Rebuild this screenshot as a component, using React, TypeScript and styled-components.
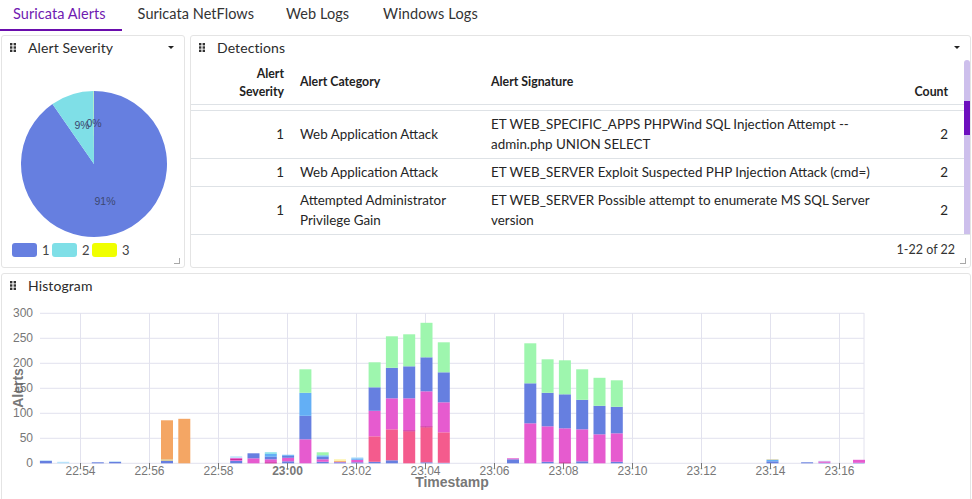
import styled, { createGlobalStyle } from "styled-components";

const GlobalStyle = createGlobalStyle`
  html, body {
    margin: 0;
    height: 100%;
    overflow: hidden;
    background: #fff;
  }
  body {
    font-family: "Lato", "Noto Sans", sans-serif;
    color: #212529;
  }
`;

const C = {
  blue: "#667fe0",
  pink: "#e65bcf",
  rose: "#f45b8d",
  green: "#9ef6ae",
  sky: "#63aff5",
  orange: "#f4a664",
  cyan: "#7fdfe7",
  tan: "#d8c98a",
  pale: "#fdf3a5",
  dark: "#c0007f",
  ice: "#b9e4fb",
};

// [start index in 30s steps from 22:53, [colour, upper value]...]
const bars: [number, [string, number][]][] = [
  [0, [[C.blue, 5], [C.ice, 6]]],
  [1, [[C.ice, 3]]],
  [3, [[C.blue, 2]]],
  [4, [[C.blue, 3], [C.ice, 4]]],
  [7, [[C.blue, 5], [C.tan, 8], [C.orange, 86]]],
  [8, [[C.orange, 89]]],
  [11, [[C.blue, 5], [C.pink, 7], [C.dark, 9], [C.pink, 11], [C.ice, 14]]],
  [12, [[C.pink, 10], [C.blue, 20]]],
  [13, [[C.dark, 2], [C.pink, 8], [C.blue, 13], [C.sky, 19], [C.cyan, 22]]],
  [14, [[C.blue, 4], [C.pink, 11], [C.blue, 15], [C.sky, 17]]],
  [15, [[C.pink, 48], [C.blue, 95], [C.sky, 141], [C.green, 188]]],
  [16, [[C.blue, 3], [C.pink, 8], [C.blue, 13], [C.sky, 16], [C.green, 22]]],
  [17, [[C.blue, 2], [C.pink, 3], [C.orange, 5], [C.pale, 8]]],
  [18, [[C.blue, 2], [C.pink, 7], [C.sky, 10], [C.ice, 12]]],
  [19, [[C.blue, 3], [C.rose, 54], [C.pink, 105], [C.blue, 152], [C.green, 202]]],
  [20, [[C.blue, 6], [C.rose, 68], [C.pink, 130], [C.blue, 191], [C.green, 254]]],
  [21, [[C.rose, 64], [C.dark, 66], [C.pink, 130], [C.blue, 194], [C.green, 258]]],
  [22, [[C.blue, 2], [C.rose, 72], [C.dark, 74], [C.pink, 144], [C.blue, 212], [C.green, 281]]],
  [23, [[C.blue, 1], [C.rose, 62], [C.pink, 122], [C.blue, 182], [C.green, 242]]],
  [27, [[C.blue, 8], [C.pink, 10]]],
  [28, [[C.pink, 80], [C.blue, 160], [C.green, 240]]],
  [29, [[C.blue, 3], [C.pink, 74], [C.blue, 141], [C.green, 208]]],
  [30, [[C.dark, 2], [C.pink, 70], [C.blue, 138], [C.green, 206]]],
  [31, [[C.blue, 4], [C.pink, 68], [C.blue, 127], [C.green, 188]]],
  [32, [[C.pink, 58], [C.blue, 115], [C.green, 171]]],
  [33, [[C.blue, 3], [C.pink, 60], [C.blue, 113], [C.green, 166]]],
  [42, [[C.blue, 4], [C.sky, 7], [C.tan, 8]]],
  [44, [[C.blue, 2]]],
  [45, [[C.blue, 1], [C.pink, 4], [C.ice, 5]]],
  [47, [[C.blue, 1], [C.pink, 7]]],
];

const ticks = ["22:54", "22:56", "22:58", "23:00", "23:02", "23:04", "23:06", "23:08", "23:10", "23:12", "23:14", "23:16"];
const levels = [0, 50, 100, 150, 200, 250, 300];

const barX = (i: number) => 45.9 + i * 17.3;
const valueY = (v: number) => 463.3 - v / 2;

const rows = [
  {
    severity: 1,
    category: "Web Application Attack",
    signature: "ET WEB_SPECIFIC_APPS PHPWind SQL Injection Attempt -- admin.php UNION SELECT",
    count: 2,
  },
  {
    severity: 1,
    category: "Web Application Attack",
    signature: "ET WEB_SERVER Exploit Suspected PHP Injection Attack (cmd=)",
    count: 2,
  },
  {
    severity: 1,
    category: "Attempted Administrator Privilege Gain",
    signature: "ET WEB_SERVER Possible attempt to enumerate MS SQL Server version",
    count: 2,
  },
];

const Page = styled.div`
  width: 972px;
  height: 499px;
  overflow: hidden;
  display: flex;
  flex-direction: column;
  gap: 5px;
`;

const TabBar = styled.div`
  display: flex;
  height: 30px;
  flex-shrink: 0;
`;

const Tab = styled.div<{ $active?: boolean }>`
  height: 31px;
  box-sizing: border-box;
  padding: 4px 16px 0;
  font-size: 14.5px;
  letter-spacing: 0.05px;
  line-height: 20px;
  color: ${(p) => (p.$active ? "#6f1ab1" : "#333")};
  border-bottom: 2px solid ${(p) => (p.$active ? "#6a0dad" : "transparent")};

  &:first-child {
    padding-left: 13px;
  }

  &:last-child {
    padding-left: 18px;
    letter-spacing: 0.15px;
  }
`;

const PanelRow = styled.div`
  display: flex;
  gap: 5px;
  padding: 0 1px;
  height: 233px;
  flex-shrink: 0;
`;

const Panel = styled.section<{ $width?: string }>`
  position: relative;
  box-sizing: border-box;
  width: ${(p) => p.$width || "auto"};
  flex: ${(p) => (p.$width ? "0 0 auto" : "1 1 0")};
  min-width: 0;
  border: 1px solid #e4e4e4;
  border-radius: 3px;
  background: #fff;
  display: flex;
  flex-direction: column;
`;

const HistogramPanel = styled(Panel)`
  margin: 0 1px;
  flex: 0 0 auto;
  height: 240px;
`;

const PanelHeader = styled.header`
  display: flex;
  align-items: center;
  height: 23px;
  flex-shrink: 0;
  padding: 0 10px 0 8px;
  font-size: 14px;
  letter-spacing: 0.1px;
  color: #2b2b2b;
`;

const PanelTitle = styled.span`
  margin-left: 12px;
  flex: 1;
`;

const Caret = styled.span`
  width: 0;
  height: 0;
  border-left: 3px solid transparent;
  border-right: 3px solid transparent;
  border-top: 3px solid #222;
`;

const Handle = styled.span`
  position: absolute;
  right: 4px;
  bottom: 3px;
  width: 5px;
  height: 5px;
  border-right: 1px solid #a8a8a8;
  border-bottom: 1px solid #a8a8a8;
`;

const PieBox = styled.div`
  flex: 1;
  display: flex;
  justify-content: center;
  padding-left: 1px;
`;

const Legend = styled.div`
  display: flex;
  align-items: center;
  height: 14px;
  padding: 0 0 10px 10px;
  font-size: 13px;
  color: #444;
`;

const Swatch = styled.i<{ $color: string }>`
  width: 25px;
  height: 14px;
  border-radius: 3px;
  background: ${(p) => p.$color};
  margin-right: 5px;
`;

const LegendLabel = styled.span`
  width: 10px;
`;

const TableArea = styled.div`
  position: relative;
  flex: 1;
  min-height: 0;
  box-sizing: border-box;
  padding-right: 6px;
  border-bottom: 1px solid #dee2e6;
`;

const Track = styled.div`
  position: absolute;
  top: 1px;
  right: 0;
  bottom: 0;
  width: 6px;
  background: #cdbfec;
  border-radius: 3px 3px 0 0;
`;

const Thumb = styled.div`
  position: absolute;
  top: 41px;
  left: 0;
  width: 100%;
  height: 34px;
  background: #6d0fbe;
`;

const rowColumns = "109px 191px 1fr 86px";

const HeadRow = styled.div`
  display: grid;
  grid-template-columns: ${rowColumns};
  height: 46px;
  box-sizing: border-box;
  border-bottom: 1px solid #dee2e6;
  font-size: 12.3px;
  font-weight: 700;
  line-height: 18px;
  color: #222;
`;

const HeadCell = styled.div<{ $right?: boolean; $end?: boolean }>`
  align-self: ${(p) => (p.$end ? "end" : "center")};
  text-align: ${(p) => (p.$right ? "right" : "left")};
  padding-right: ${(p) => (p.$right ? "16px" : "0")};
  padding-bottom: ${(p) => (p.$end ? "3px" : "0")};
`;

const HeadGap = styled.div`
  height: 5px;
  border-bottom: 1px solid #dee2e6;
`;

const RowGroup = styled.div`
  display: flex;
  flex-direction: column;
`;

const Row = styled.div`
  display: grid;
  grid-template-columns: ${rowColumns};
  align-items: center;
  box-sizing: border-box;
  padding: 3px 0 4px;
  border-bottom: 1px solid #dee2e6;
  font-size: 13.4px;
  line-height: 20px;
  color: #252525;

  &:last-child {
    border-bottom: none;
  }
`;

const NumCell = styled.div`
  text-align: right;
  padding-right: 16px;
`;

const Cell = styled.div``;

const Footer = styled.div`
  height: 32px;
  flex-shrink: 0;
  box-sizing: border-box;
  display: flex;
  align-items: center;
  justify-content: flex-end;
  padding: 0 15px 4px 0;
  font-size: 12.5px;
  color: #333;
`;

const Axis = styled.text`
  font-family: "Liberation Sans", sans-serif;
  font-size: 12px;
  fill: #777;
`;

const AxisTitle = styled.text`
  font-family: "Liberation Sans", sans-serif;
  font-size: 14px;
  font-weight: 700;
  fill: #666;
  fill-opacity: 0.9;
`;

const PieLabel = styled.text`
  font-family: "Liberation Sans", sans-serif;
  font-size: 10.5px;
  fill: #3c4870;
  text-anchor: middle;
`;

const Grip = () => (
  <svg width="6" height="9" viewBox="0 0 6 9">
    {[0, 3.3, 6.6].map((y) =>
      [0, 3.6].map((x) => <rect key={`${x}-${y}`} x={x} y={y} width="2.4" height="2.4" fill="#333" />)
    )}
  </svg>
);

const sector = (from: number, to: number) => {
  const cx = 75;
  const cy = 75;
  const r = 73;
  const pt = (deg: number) => {
    const a = (deg * Math.PI) / 180;
    return `${cx + r * Math.sin(a)} ${cy - r * Math.cos(a)}`;
  };
  return `M${cx} ${cy}L${pt(from)}A${r} ${r} 0 ${to - from > 180 ? 1 : 0} 1 ${pt(to)}Z`;
};

const Pie = () => (
  <svg width="150" height="184" viewBox="0 -30 150 184">
    <path d={sector(0, 325.3)} fill={C.blue} />
    <path d={sector(325.3, 359.7)} fill={C.cyan} />
    <path d={sector(359.7, 360)} fill="#c8f080" />
    <PieLabel x="63" y="40">9%</PieLabel>
    <PieLabel x="75" y="38">0%</PieLabel>
    <PieLabel x="86" y="116">91%</PieLabel>
  </svg>
);

const Histogram = () => (
  <svg width="968" height="201" viewBox="2 297 968 201">
    {levels.map((v) => (
      <g key={v}>
        <line x1="40" x2="864" y1={valueY(v)} y2={valueY(v)} stroke="#e2e2ee" />
        <Axis x="33" y={valueY(v) + 4} textAnchor="end">{v}</Axis>
      </g>
    ))}
    {ticks.map((t, i) => (
      <line key={t} x1={80.5 + i * 69} x2={80.5 + i * 69} y1="313" y2="463" stroke="#e2e2ee" />
    ))}
    <line x1="864" x2="864" y1="313" y2="463" stroke="#e2e2ee" />
    {bars.map(([i, segments]) =>
      segments.map(([color, top], s) => {
        const bottom = s ? segments[s - 1][1] : 0;
        return (
          <rect
            key={`${i}-${s}`}
            x={barX(i) - 6}
            y={valueY(top)}
            width="12"
            height={(top - bottom) / 2}
            fill={color}
          />
        );
      })
    )}
    {ticks.map((t, i) => (
      <g key={t}>
        <line x1={80.5 + i * 69} x2={80.5 + i * 69} y1="463" y2="469" stroke="#777" />
        <Axis
          x={80.5 + i * 69}
          y="475"
          textAnchor="middle"
          fontWeight={t === "23:00" ? 700 : 400}
        >
          {t}
        </Axis>
      </g>
    ))}
    <AxisTitle x="452" y="487" textAnchor="middle">Timestamp</AxisTitle>
    <AxisTitle x="23" y="388" textAnchor="middle" transform="rotate(-90 23 388)">Alerts</AxisTitle>
  </svg>
);

const App = () => {
  return (
    <Page>
      <GlobalStyle />
      <TabBar>
        <Tab $active>Suricata Alerts</Tab>
        <Tab>Suricata NetFlows</Tab>
        <Tab>Web Logs</Tab>
        <Tab>Windows Logs</Tab>
      </TabBar>
      <PanelRow>
        <Panel $width="184px">
          <PanelHeader>
            <Grip />
            <PanelTitle>Alert Severity</PanelTitle>
            <Caret />
          </PanelHeader>
          <PieBox>
            <Pie />
          </PieBox>
          <Legend>
            <Swatch $color={C.blue} />
            <LegendLabel>1</LegendLabel>
            <Swatch $color={C.cyan} />
            <LegendLabel>2</LegendLabel>
            <Swatch $color="#f0ff00" />
            <LegendLabel>3</LegendLabel>
          </Legend>
          <Handle />
        </Panel>
        <Panel>
          <PanelHeader>
            <Grip />
            <PanelTitle>Detections</PanelTitle>
            <Caret />
          </PanelHeader>
          <TableArea>
            <HeadRow>
              <HeadCell $right $end>Alert<br />Severity</HeadCell>
              <HeadCell>Alert Category</HeadCell>
              <HeadCell>Alert Signature</HeadCell>
              <HeadCell $right $end>Count</HeadCell>
            </HeadRow>
            <HeadGap />
            <RowGroup>
              {rows.map((r) => (
                <Row key={r.signature}>
                  <NumCell>{r.severity}</NumCell>
                  <Cell>{r.category}</Cell>
                  <Cell>{r.signature}</Cell>
                  <NumCell>{r.count}</NumCell>
                </Row>
              ))}
            </RowGroup>
            <Track>
              <Thumb />
            </Track>
          </TableArea>
          <Footer>1-22 of 22</Footer>
          <Handle />
        </Panel>
      </PanelRow>
      <HistogramPanel>
        <PanelHeader>
          <Grip />
          <PanelTitle>Histogram</PanelTitle>
        </PanelHeader>
        <Histogram />
      </HistogramPanel>
    </Page>
  );
};

export default App;
